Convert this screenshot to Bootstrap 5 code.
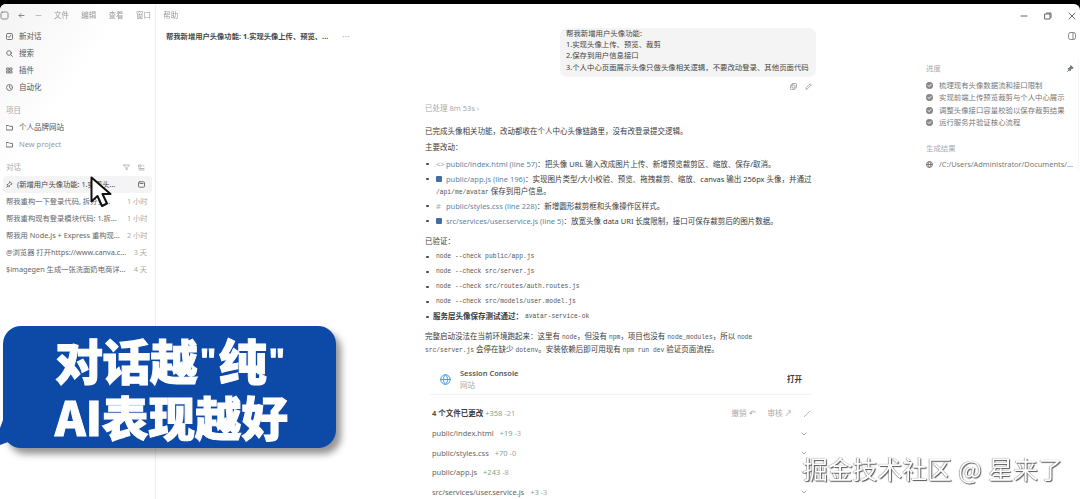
<!DOCTYPE html>
<html lang="zh-CN">
<head>
  <meta charset="UTF-8">
  <meta name="viewport" content="width=device-width, initial-scale=1.0">
  <title>新增用户头像功能</title>
  <link href="https://cdn.jsdelivr.net/npm/bootstrap@5.3.0/dist/css/bootstrap.min.css" rel="stylesheet">
  <style>
    html, body { height: 100%; overflow: hidden; background: #000; }
    body {
      position: relative;
      font-family: "Noto Sans", "Noto Sans CJK SC", sans-serif;
      font-size: 7.5px;
      color: #3a3a3a;
    }
    svg { flex: none; fill: none; stroke: currentColor; stroke-width: 1; stroke-linecap: round; stroke-linejoin: round; }
    .app-shell {
      height: 495px;
      margin-top: 4px;
      background: #fff;
      border-radius: 6px 6px 0 0;
      filter: blur(.45px);
      overflow: hidden;
    }
    .title-strip { height: 24px; color: #888; }
    .title-strip .menu-word { color: #999; width: 27.3px; }
    .win-btns { gap: 16px; color: #666; padding-right: 4px; }
    .side-col {
      width: 156px;
      border-right: 1px solid #f0f0f0;
      background: linear-gradient(125deg, #f3f3f3 0, #fff 26%);
      margin-top: -24px;
      padding-top: 24px;
    }
    .side-row { height: 17px; padding: 0 6px; gap: 6px; color: #555; }
    .side-row svg { color: #777; }
    .side-label { height: 17px; padding: 0 6px; color: #aaa; margin-top: 6px; }
    .side-row.faded { color: #999; }
    .chat-row { height: 17px; padding: 0 8px 0 6px; color: #666; font-size: 7.3px; }
    .chat-row .chat-name { flex: 1; min-width: 0; white-space: nowrap; overflow: hidden; }
    .chat-row .chat-age { color: #aaa; width: 20px; flex: none; text-align: right; white-space: nowrap; }
    .chat-row.is-active { background: #f4f4f4; border-radius: 4px; color: #444; margin: 0 3px; padding: 0 3px; }
    .head-col { width: 269px; padding: 0 10px; height: 17px; font-weight: 700; color: #444; font-size: 7.3px; white-space: nowrap; }
    .head-col .dots { color: #aaa; margin-left: 14px; letter-spacing: .5px; }
    .thread-col { width: 391px; flex: none; }
    .user-bubble {
      margin-left: 135px;
      background: #f4f4f4;
      border-radius: 7px;
      padding: 0 6px 4px;
      line-height: 11.3px;
      color: #444;
      white-space: nowrap;
      font-size: 7.4px;
    }
    .bubble-tools { height: 10px; margin-top: 4px; gap: 8px; color: #aaa; padding-right: 4px; }
    .line-gray { color: #aaa; line-height: 11px; margin-top: 11.5px; }
    .line-plain { line-height: 11px; margin: 0; white-space: nowrap; }
    .change-list { margin: 5px 0 0; padding: 0; list-style: none; line-height: 12px; }
    .change-list li { padding-left: 11px; position: relative; margin-bottom: 3px; white-space: nowrap; }
    .change-list li::before, .check-list li::before {
      content: ""; position: absolute; left: 1px; top: 5px;
      width: 2.5px; height: 2.5px; border-radius: 50%; background: #444;
    }
    .file-link { color: #5c86a8; }
    .file-link i { display: inline-block; width: 6px; height: 6px; background: #3f6fa5; border-radius: 1px; margin-right: 2px; vertical-align: -.5px; }
    .file-link b { font-weight: 400; color: #aaa; display: inline-block; width: 8px; }
    .code-word { font-family: "Liberation Mono", monospace; font-size: 6.3px; color: #555; line-height: 1; }
    .check-list { margin: 3px 0 0; padding: 0; list-style: none; }
    .check-list li { height: 15px; padding-left: 11px; position: relative; display: flex; align-items: center; }
    .check-list li::before { top: 6px; }
    .final-para { line-height: 13px; margin: 5px 0 0; white-space: nowrap; }
    .site-box { height: 30px; margin: 9.5px 4px 0 5px; padding: 0 10px; border-bottom: 1px solid #f3f3f3; }
    .site-box .site-globe { color: #4d9ad0; margin-right: 9px; }
    .site-box .site-name { font-weight: 600; color: #555; line-height: 11px; }
    .site-box .site-type { color: #aaa; line-height: 12px; }
    .files-head { height: 20px; margin: 9px 4px 0 7px; gap: 12px; }
    .files-head .muted-act { color: #aaa; }
    .file-row { height: 19.5px; margin: 0 4px 0 7px; color: #666; }
    .num-add { color: #78a78f; }
    .num-del { color: #b9a0a0; }
    .chev { color: #aaa; margin-right: 5px; }
    .right-col { flex: 1; padding: 0 4px 0 104px; min-width: 0; }
    .panel-toggle { height: 17px; color: #888; justify-content: flex-end; padding-right: 0; }
    .progress-box { margin: 14px -3px 0 0; padding: 3px 4px 0 6px; color: #777; border-right: 1px solid #f5f5f5; font-size: 7.4px; }
    .progress-box .box-label { color: #aaa; height: 13px; }
    .progress-step { height: 12.6px; gap: 6px; white-space: nowrap; }
    .step-mark { color: #888; }
    .result-line { height: 14px; gap: 6px; white-space: nowrap; overflow: hidden; }
    .tip-bubble {
      position: absolute; left: 3px; top: 326px; width: 333px; height: 122px;
      background: #0d4aa8; border-radius: 18px;
      box-shadow: 5px 6px 7px rgba(60, 60, 60, .55);
      color: #fff; font-family: "Noto Sans CJK SC", sans-serif; font-weight: 900;
      padding: 6px 0 0 52px; line-height: 55px; white-space: nowrap;
      -webkit-text-stroke: 1px #fff;
    }
    .tip-first { font-size: 48px; letter-spacing: -.5px; }
    .tip-first span { font-family: "Liberation Sans", sans-serif; font-size: 34px; letter-spacing: 0; vertical-align: 8px; margin: 0 2.5px; }
    .tip-second { font-size: 46.5px; }
    .tip-tail { position: absolute; left: -3px; top: 94px; fill: #0d4aa8; stroke: none; }
    .cursor-mark { position: absolute; left: 90px; top: 176px; fill: #fff; stroke: #111; stroke-width: 2; }
    .wm-text {
      position: absolute; left: 803px; top: 451px; font-size: 24.8px; line-height: 34px; white-space: nowrap;
      font-family: "Noto Sans CJK SC", sans-serif; color: #fff; word-spacing: 1px;
      text-shadow: 1px 1px 1px #555, -.5px -.5px 1px #777;
    }
  </style>
</head>
<body>
  <div class="app-shell d-flex flex-column">
    <div class="title-strip d-flex align-items-center position-relative">
      <svg width="9" height="9" viewBox="0 0 9 9" class="me-2"><rect x="1" y="1" width="7" height="7" rx="1.5"/></svg>
      <svg width="9" height="9" viewBox="0 0 9 9" class="me-2"><path d="M7 4.500H2M4 2.500l-2 2 2 2"/></svg>
      <svg width="9" height="9" viewBox="0 0 9 9" style="margin-right:11px" class="opacity-50"><path d="M2 4.500h5"/></svg>
      <span class="menu-word">文件</span><span class="menu-word">编辑</span><span class="menu-word">查看</span><span class="menu-word">窗口</span><span class="menu-word">帮助</span>
      <div class="win-btns d-flex align-items-center ms-auto">
        <svg width="8" height="8" viewBox="0 0 8 8"><path d="M1 4h6"/></svg>
        <svg width="8" height="8" viewBox="0 0 8 8"><rect x="1" y="2" width="5" height="5"/><path d="M2.500 1H7v4.500"/></svg>
        <svg width="8" height="8" viewBox="0 0 8 8"><path d="M1 1l6 6M7 1L1 7"/></svg>
      </div>
    </div>

    <div class="d-flex flex-grow-1" style="min-height:0">
      <aside class="side-col flex-none">
        <div class="side-row d-flex align-items-center"><svg width="7" height="7" viewBox="0 0 7 7"><rect x=".5" y=".5" width="6" height="6" rx="1"/><path d="M2 3.500l1 1 2-2.500"/></svg>新对话</div>
        <div class="side-row d-flex align-items-center"><svg width="7" height="7" viewBox="0 0 7 7"><circle cx="3" cy="3" r="2.300"/><path d="M5 5l1.500 1.500"/></svg>搜索</div>
        <div class="side-row d-flex align-items-center"><svg width="7" height="7" viewBox="0 0 7 7"><path d="M1 1h2v2H1zM4 1h2v2H4zM1 4h2v2H1zM4 4h2v2H4z"/></svg>插件</div>
        <div class="side-row d-flex align-items-center"><svg width="7" height="7" viewBox="0 0 7 7"><circle cx="3.500" cy="3.500" r="3"/><path d="M3.500 1.800v1.900l1.200.7"/></svg>自动化</div>
        <div class="side-label d-flex align-items-center">项目</div>
        <div class="side-row d-flex align-items-center"><svg width="7" height="7" viewBox="0 0 7 7"><path d="M.5 1.500h2.200l.8.800h3v3.700h-6z"/></svg>个人品牌网站</div>
        <div class="side-row faded d-flex align-items-center"><svg width="7" height="7" viewBox="0 0 7 7"><path d="M.5 1.500h2.200l.8.800h3v3.700h-6z"/></svg>New project</div>
        <div class="side-label d-flex align-items-center justify-content-between">对话
          <span class="d-flex gap-2 me-1 text-secondary opacity-50">
            <svg width="7" height="7" viewBox="0 0 7 7"><path d="M.5 1h6L4 3.800V6L3 5.500V3.800z"/></svg>
            <svg width="7" height="7" viewBox="0 0 7 7"><path d="M1 1h2v2H1zM4.500 1l1.500 1.500M1 4.500h5M1 6h5"/></svg>
          </span>
        </div>
        <div class="chat-row is-active d-flex align-items-center">
          <svg width="7" height="7" viewBox="0 0 7 7" class="me-1 text-secondary"><path d="M4 .8l2.200 2.200-1.500.5-1.300 1.300-.2 1L1 3.600l1-.2 1.300-1.300zM1.800 5.200L.7 6.300"/></svg>
          <span class="chat-name">(新增用户头像功能: 1.实现头...</span>
          <svg width="7" height="7" viewBox="0 0 7 7" class="ms-3 me-1 text-secondary"><rect x=".5" y=".8" width="6" height="5.400" rx="1"/><path d="M2 2.500h3"/></svg>
        </div>
        <div class="chat-row d-flex align-items-center"><span class="chat-name">帮我重构一下登录代码, 拆分登...</span><span class="chat-age">1 小时</span></div>
        <div class="chat-row d-flex align-items-center"><span class="chat-name">帮我重构现有登录模块代码: 1.拆...</span><span class="chat-age">1 小时</span></div>
        <div class="chat-row d-flex align-items-center"><span class="chat-name">帮我用 Node.js + Express 重构现...</span><span class="chat-age">2 小时</span></div>
        <div class="chat-row d-flex align-items-center"><span class="chat-name">@浏览器 打开https://www.canva.c...</span><span class="chat-age">3 天</span></div>
        <div class="chat-row d-flex align-items-center"><span class="chat-name">$imagegen 生成一张洗面奶电商详...</span><span class="chat-age">4 天</span></div>
      </aside>

      <div class="head-col d-flex align-items-center flex-none">帮我新增用户头像功能: 1.实现头像上传、预览、... <span class="dots">···</span></div>

      <main class="thread-col">
        <div class="user-bubble">帮我新增用户头像功能:<br>1.实现头像上传、预览、裁剪<br>2.保存到用户信息接口<br>3.个人中心页面展示头像只做头像相关逻辑，不要改动登录、其他页面代码</div>
        <div class="bubble-tools d-flex justify-content-end align-items-center">
          <svg width="7" height="7" viewBox="0 0 7 7"><rect x="2" y=".5" width="4.500" height="4.500" rx=".8"/><rect x=".5" y="2" width="4.500" height="4.500" rx=".8"/></svg>
          <svg width="7" height="7" viewBox="0 0 7 7"><path d="M1 6l.3-1.500L5 .8l1.200 1.200L2.500 5.700z"/></svg>
        </div>
        <div class="line-gray">已处理 8m 53s ›</div>
        <p class="line-plain" style="margin-top:12px">已完成头像相关功能，改动都收在个人中心头像链路里，没有改登录提交逻辑。</p>
        <p class="line-plain" style="margin-top:5px">主要改动：</p>
        <ul class="change-list">
          <li><span class="file-link"><b>&lt;&gt;</b> public/index.html (line 57)</span>：把头像 URL 输入改成图片上传、新增预览裁剪区、缩放、保存/取消。</li>
          <li><span class="file-link"><i></i> public/app.js (line 196)</span>：实现图片类型/大小校验、预览、拖拽裁剪、缩放、canvas 输出 256px 头像，并通过<br><span class="code-word">/api/me/avatar</span> 保存到用户信息。</li>
          <li><span class="file-link"><b>#</b> public/styles.css (line 228)</span>：新增圆形裁剪框和头像操作区样式。</li>
          <li class="mb-0"><span class="file-link"><i></i> src/services/user.service.js (line 5)</span>：放宽头像 data URI 长度限制，接口可保存裁剪后的图片数据。</li>
        </ul>
        <p class="line-plain" style="margin-top:9px">已验证：</p>
        <ul class="check-list">
          <li><span class="code-word">node --check public/app.js</span></li>
          <li><span class="code-word">node --check src/server.js</span></li>
          <li><span class="code-word">node --check src/routes/auth.routes.js</span></li>
          <li><span class="code-word">node --check src/models/user.model.js</span></li>
          <li><span class="fw-semibold" style="margin-left:-3px">服务层头像保存测试通过：</span>&nbsp;<span class="code-word">avatar-service-ok</span></li>
        </ul>
        <p class="final-para">完整启动没法在当前环境跑起来：这里有 <span class="code-word">node</span>，但没有 <span class="code-word">npm</span>，项目也没有 <span class="code-word">node_modules</span>，所以 <span class="code-word">node</span><br><span class="code-word">src/server.js</span> 会停在缺少 <span class="code-word">dotenv</span>。安装依赖后即可用现有 <span class="code-word">npm run dev</span> 验证页面流程。</p>

        <div class="site-box d-flex align-items-center">
          <svg class="site-globe" width="11" height="11" viewBox="0 0 11 11"><circle cx="5.500" cy="5.500" r="4.800"/><path d="M.7 5.500h9.600M5.500.7c-3 3-3 6.600 0 9.600M5.500.7c3 3 3 6.600 0 9.600"/></svg>
          <div class="flex-grow-1">
            <div class="site-name">Session Console</div>
            <div class="site-type">网站</div>
          </div>
          <span class="fw-semibold">打开</span>
        </div>

        <div class="files-head d-flex align-items-center">
          <span class="me-auto"><span class="fw-semibold">4 个文件已更改</span> <span class="num-add">+358</span> <span class="num-del">-21</span></span>
          <span class="muted-act">撤销 ↶</span>
          <span class="muted-act">审核 ↗</span>
          <svg class="chev" width="6" height="6" viewBox="0 0 6 6" style="margin-right:2px"><path d="M3.500 2.500L5.500.5M2.500 3.500l-2 2"/></svg>
        </div>
        <div class="file-row d-flex align-items-center"><span class="me-auto">public/index.html <span class="ms-1 num-add">+19</span> <span class="num-del">-3</span></span><svg class="chev" width="6" height="6" viewBox="0 0 6 6"><path d="M1 2l2 2 2-2"/></svg></div>
        <div class="file-row d-flex align-items-center"><span class="me-auto">public/styles.css <span class="ms-1 num-add">+70</span> <span class="num-del">-0</span></span><svg class="chev" width="6" height="6" viewBox="0 0 6 6"><path d="M1 2l2 2 2-2"/></svg></div>
        <div class="file-row d-flex align-items-center"><span class="me-auto">public/app.js <span class="ms-1 num-add">+243</span> <span class="num-del">-8</span></span><svg class="chev" width="6" height="6" viewBox="0 0 6 6"><path d="M1 2l2 2 2-2"/></svg></div>
        <div class="file-row d-flex align-items-center"><span class="me-auto">src/services/user.service.js <span class="ms-1 num-add">+3</span> <span class="num-del">-3</span></span><svg class="chev" width="6" height="6" viewBox="0 0 6 6"><path d="M1 2l2 2 2-2"/></svg></div>
      </main>

      <div class="right-col">
        <div class="panel-toggle d-flex align-items-center">
          <svg width="8" height="8" viewBox="0 0 8 8"><rect x=".5" y=".5" width="7" height="7" rx="2"/><path d="M5 .8v6.400"/></svg>
        </div>
        <div class="progress-box">
          <div class="box-label d-flex align-items-center justify-content-between">进度
            <svg width="7" height="7" viewBox="0 0 7 7" class="text-secondary" style="fill:currentColor"><path d="M4 .8l2.200 2.200-1.500.5-1.300 1.300-.2 1L1 3.600l1-.2 1.300-1.300zM1.800 5.200L.7 6.300"/></svg>
          </div>
          <div class="progress-step d-flex align-items-center" style="margin-top:4px"><svg class="step-mark" width="7" height="7" viewBox="0 0 7 7"><circle cx="3.500" cy="3.500" r="3.200" fill="currentColor"/><path d="M2 3.500l1.100 1.100L5 2.500" stroke="#fff"/></svg>梳理现有头像数据流和接口限制</div>
          <div class="progress-step d-flex align-items-center"><svg class="step-mark" width="7" height="7" viewBox="0 0 7 7"><circle cx="3.500" cy="3.500" r="3.200" fill="currentColor"/><path d="M2 3.500l1.100 1.100L5 2.500" stroke="#fff"/></svg>实现前端上传预览裁剪与个人中心展示</div>
          <div class="progress-step d-flex align-items-center"><svg class="step-mark" width="7" height="7" viewBox="0 0 7 7"><circle cx="3.500" cy="3.500" r="3.200" fill="currentColor"/><path d="M2 3.500l1.100 1.100L5 2.500" stroke="#fff"/></svg>调整头像接口容量校验以保存裁剪结果</div>
          <div class="progress-step d-flex align-items-center"><svg class="step-mark" width="7" height="7" viewBox="0 0 7 7"><circle cx="3.500" cy="3.500" r="3.200" fill="currentColor"/><path d="M2 3.500l1.100 1.100L5 2.500" stroke="#fff"/></svg>运行服务并验证核心流程</div>
          <div class="box-label d-flex align-items-center" style="margin-top:13px">生成结果</div>
          <div class="result-line d-flex align-items-center" style="margin-top:2px"><svg width="7" height="7" viewBox="0 0 7 7"><circle cx="3.500" cy="3.500" r="3"/><path d="M.5 3.500h6M3.500.5c-1.800 2-1.800 4 0 6M3.500.5c1.800 2 1.800 4 0 6"/></svg>/C:/Users/Administrator/Documents/...</div>
        </div>
      </div>
    </div>
  </div>

  <div class="tip-bubble">
    <svg class="tip-tail" width="12" height="28" viewBox="0 0 12 28"><path d="M3 0h9v22H8L0 25V8z"/></svg>
    <div class="tip-first">对话越<span>"</span>纯<span>"</span></div>
    <div class="tip-second">AI表现越好</div>
  </div>

  <svg class="cursor-mark" width="26" height="34" viewBox="0 0 26 34"><path d="M1.500 1.500v24l6-5.500 4.500 10 5-2.500-4.500-9.500h8z"/></svg>

  <div class="wm-text">掘金技术社区 @ 星来了</div>

  <script src="https://cdn.jsdelivr.net/npm/bootstrap@5.3.0/dist/js/bootstrap.bundle.min.js"></script>
</body>
</html>
